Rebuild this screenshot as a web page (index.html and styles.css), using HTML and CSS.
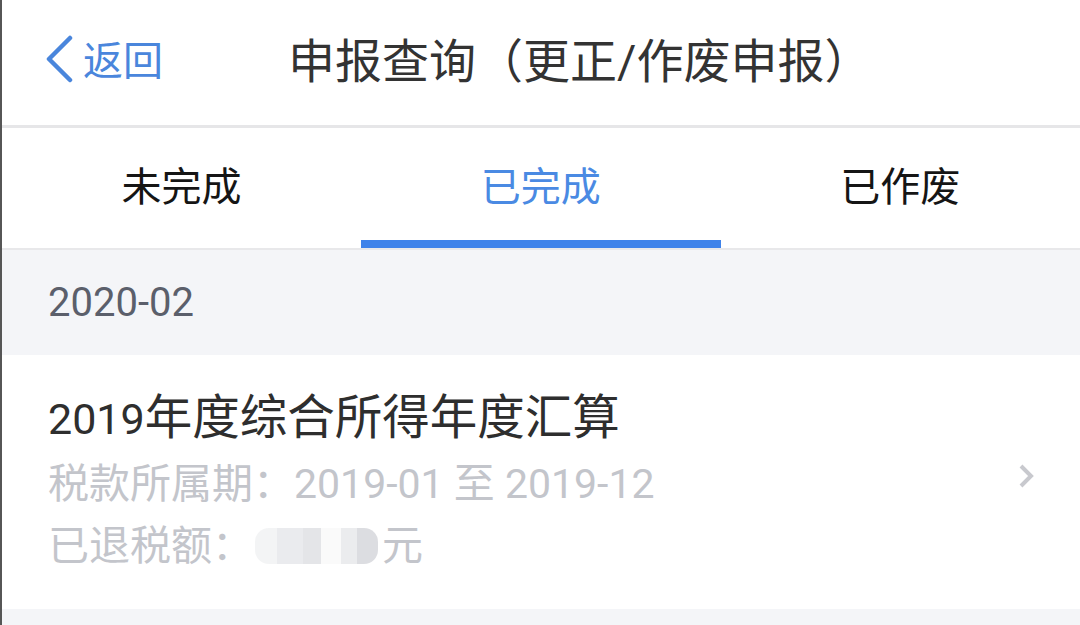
FILE: index.html
```html
<!DOCTYPE html>
<html lang="zh-CN">
<head>
  <meta charset="UTF-8">
  <meta name="viewport" content="width=device-width, initial-scale=1.0">
  <title>申报查询</title>
  <link rel="stylesheet" href="styles.css">
</head>
<body>
  <div class="screen">
    <header class="topbar">
      <a class="back" href="#">
        <svg class="back-icon" width="30" height="48" viewBox="0 0 30 48">
          <path d="M26 3 L5 24 L26 45" fill="none" stroke="#4a86dc" stroke-width="4.5" stroke-linecap="round" stroke-linejoin="round"/>
        </svg>
        <span>返回</span>
      </a>
      <h1 class="title">申报查询（更正/作废申报）</h1>
    </header>

    <nav class="tabs">
      <div class="tab">未完成</div>
      <div class="tab active">已完成</div>
      <div class="tab">已作废</div>
    </nav>

    <div class="group-head">2020-02</div>

    <div class="record">
      <div class="record-body">
        <div class="record-title"><span class="num">2019</span>年度综合所得年度汇算</div>
        <div class="record-line first">税款所属期：2019-01 至 2019-12</div>
        <div class="record-line">已退税额：<span class="masked"></span>元</div>
      </div>
      <svg class="arrow" width="18" height="26" viewBox="0 0 18 26">
        <path d="M4 3 L14 13 L4 23" fill="none" stroke="#c8c9ce" stroke-width="4"/>
      </svg>
    </div>

    <div class="rest"></div>
  </div>
</body>
</html>
```

FILE: styles.css
```css
html, body { margin: 0; padding: 0; height: 100%; overflow: hidden; }
body { font-family: Roboto, "Noto Sans CJK SC", sans-serif; background: #f4f5f8; color: #333; }

.screen { height: 100%; display: flex; flex-direction: column; border-left: 2px solid #565656; box-sizing: border-box; }

.topbar { background: #fff; border-bottom: 3px solid #e6e6e8; display: flex; align-items: center; padding: 0 0 10px 42px; height: 115px; flex-shrink: 0; }
.back { display: flex; align-items: center; gap: 9px; color: #4a86dc; text-decoration: none; font-size: 40px; }
.back-icon { position: relative; top: 1px; }
.title { margin: 0 0 0 125px; font-weight: normal; font-size: 47px; color: #333; }

.tabs { display: flex; height: 122px; background: #fff; border-bottom: 2px solid #e8e8ea; box-sizing: border-box; flex-shrink: 0; }
.tab { flex: 1; display: flex; align-items: center; justify-content: center; font-size: 40px; color: #151515; box-sizing: border-box; border-bottom: 8px solid transparent; }
.tab:first-child { flex: 0 0 359px; }
.tab.active { color: #4a8ae3; border-bottom-color: #3f83ea; }

.group-head { height: 105px; display: flex; align-items: center; padding-left: 46px; font-size: 40px; color: #5b5f6b; flex-shrink: 0; }

.record { background: #fff; display: flex; align-items: center; padding: 33px 45px 32px 46px; flex-shrink: 0; }
.record-body { flex: 1; }
.record-title { font-size: 47.5px; line-height: 60px; color: #2e2e2e; }
.record-title .num { font-size: 43px; }
.record-line { font-size: 41px; line-height: 62px; color: #c3c5cb; display: flex; align-items: center; white-space: pre; }
.record-line.first { margin-top: 4px; }
.masked {
  display: inline-block; width: 123px; height: 36px; margin: 0 4px 0 2px;
  border-radius: 14px;
  background: linear-gradient(to right, #f3f4f5 0, #f3f4f5 22px, #eaebee 22px, #eaebee 48px, #e4e5e8 48px, #e4e5e8 66px, #fafafa 66px, #fafafa 86px, #ebecee 86px, #ebecee 102px, #dcdde1 102px, #dcdde1 123px);
}
.arrow { margin-bottom: 14px; }

.rest { flex: 1; }
```
